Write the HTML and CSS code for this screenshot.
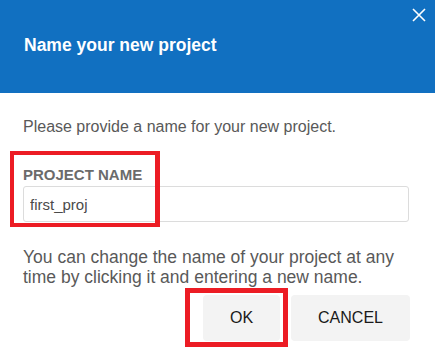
FILE: index.html
```html
<!DOCTYPE html>
<html lang="en">
<head>
  <meta charset="UTF-8">
  <meta name="viewport" content="width=device-width, initial-scale=1.0">
  <title>Name your new project</title>
  <link rel="stylesheet" href="styles.css">
</head>
<body>
  <div class="dialog">
    <!-- Header -->
    <div class="dialog-header">
      <h2 class="dialog-title">Name your new project</h2>
      <button class="close-btn" aria-label="Close">
        <svg width="14" height="14" viewBox="0 0 14 14">
          <path d="M1 1 L13 13 M13 1 L1 13" stroke="#ffffff" stroke-width="1.6" fill="none"/>
        </svg>
      </button>
    </div>

    <!-- Body -->
    <div class="dialog-body">
      <p class="intro">Please provide a name for your new project.</p>
      <label class="field-label" for="project-name">Project name</label>
      <input class="field-input" id="project-name" type="text" value="first_proj">
      <p class="note">You can change the name of your project at any time by clicking it and entering a new name.</p>
    </div>

    <!-- Footer -->
    <div class="dialog-footer">
      <button class="btn">OK</button>
      <button class="btn">CANCEL</button>
    </div>

    <!-- Annotation boxes -->
    <div class="mark mark-field"></div>
    <div class="mark mark-ok"></div>
  </div>
</body>
</html>
```

FILE: styles.css
```css
body {
  margin: 0;
  padding: 0;
  background: #ffffff;
  font-family: "Liberation Sans", Arial, sans-serif;
  color: #595959;
}

.dialog {
  position: relative;
  width: 435px;
  height: 349px;
  overflow: hidden;
  background: #ffffff;
}

.dialog-header {
  height: 93px;
  box-sizing: border-box;
  padding: 35px 23px 0 24px;
  background: #1170c1;
}

.dialog-title {
  margin: 0;
  font-size: 17.5px;
  line-height: 20px;
  font-weight: bold;
  color: #ffffff;
}

.close-btn {
  position: absolute;
  top: 8px;
  right: 9px;
  width: 14px;
  height: 14px;
  padding: 0;
  border: none;
  background: none;
  cursor: pointer;
}

.close-btn svg {
  display: block;
}

.dialog-body {
  padding: 24px 26px 0 23px;
}

.intro {
  margin: 0;
  font-size: 16px;
  line-height: 20px;
}

.field-label {
  display: block;
  margin-top: 29px;
  font-size: 15px;
  line-height: 18px;
  font-weight: bold;
  text-transform: uppercase;
  color: #6b6b6b;
}

.field-input {
  display: block;
  width: 100%;
  height: 36px;
  margin-top: 2px;
  box-sizing: border-box;
  padding: 0 6px;
  border: 1px solid #dcdcdc;
  border-radius: 3px;
  font-family: inherit;
  font-size: 15px;
  color: #4a4a4a;
}

.note {
  margin: 25px 0 0;
  font-size: 17.5px;
  line-height: 20px;
}

.dialog-footer {
  display: flex;
  justify-content: flex-end;
  gap: 11px;
  padding: 8px 25px 0 0;
}

.btn {
  height: 46px;
  padding: 0 24px;
  border: none;
  border-radius: 4px;
  background: #f3f3f3;
  font-family: inherit;
  font-size: 16px;
  color: #1a1a1a;
  cursor: pointer;
}

.btn:first-child {
  width: 77px;
}

.btn:last-child {
  width: 119px;
}

/* red highlight rectangles drawn over the dialog */
.mark {
  position: absolute;
  box-sizing: border-box;
  border: 5px solid #ec1c24;
}

.mark-field {
  left: 10px;
  top: 151px;
  width: 150px;
  height: 76px;
  border-width: 4px 5px 4px 4px;
}

.mark-ok {
  left: 185px;
  top: 288px;
  width: 103px;
  height: 59px;
}
```
